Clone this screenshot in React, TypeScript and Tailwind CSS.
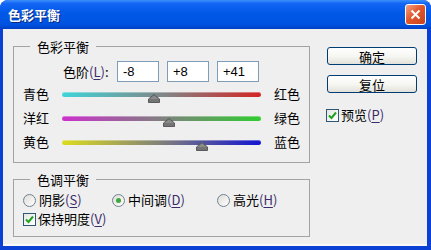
import React from 'react';

interface SliderRow {
  left: string;
  right: string;
  value: number;
  track: string;
}

const sliders: SliderRow[] = [
  { left: '青色', right: '红色', value: -8, track: 'bg-[linear-gradient(to_right,#40d4d8,#7f8888_50%,#d42424)]' },
  { left: '洋红', right: '绿色', value: 8, track: 'bg-[linear-gradient(to_right,#cc30cc,#808080_50%,#30cc30)]' },
  { left: '黄色', right: '蓝色', value: 41, track: 'bg-[linear-gradient(to_right,#dcdc20,#80807a_50%,#1414d4)]' },
];

const TRACK_W = 199;

function Key({ k }: { k: string }) {
  return (
    <span className="text-[#3a2c6a]">
      (<span className="underline underline-offset-[2px]">{k}</span>)
    </span>
  );
}

function CheckBox() {
  return (
    <span className="w-[13px] h-[13px] shrink-0 border border-[#2f5577] bg-[linear-gradient(135deg,#e6e6e0,#ffffff)] flex items-center justify-center">
      <svg width="11" height="11" viewBox="0 0 11 11">
        <path d="M2 5.5 L4.5 8 L9 2.5" fill="none" stroke="#21a121" strokeWidth="2" />
      </svg>
    </span>
  );
}

function Radio({ checked }: { checked?: boolean }) {
  return (
    <span className="w-[13px] h-[13px] shrink-0 rounded-full border border-[#6f8294] bg-[linear-gradient(135deg,#dedcd6,#ffffff)] flex items-center justify-center">
      {checked && <span className="w-[5px] h-[5px] rounded-full bg-[#3ea83e]" />}
    </span>
  );
}

function Caption({ text }: { text: string }) {
  return <div className="-mt-[8px] ml-[16px] px-[7px] w-fit bg-[#efefef] leading-[15px]">{text}</div>;
}

function Thumb({ value }: { value: number }) {
  const left = ((value + 100) / 200) * TRACK_W - 6;
  return (
    <svg className="absolute top-[2px]" style={{ left }} width="12" height="9" viewBox="0 0 12 9">
      <path d="M6 0.5 L11.5 5 L11.5 8.5 L0.5 8.5 L0.5 5 Z" fill="#747474" stroke="#5a5a5a" strokeWidth="1" />
      <path d="M6 1.5 L10.5 5 L1.5 5 Z" fill="#8c8c8c" />
    </svg>
  );
}

export default function App() {
  return (
    <div className="w-[431px] h-[250px] bg-[#0a40d4] rounded-t-[8px] flex flex-col overflow-hidden font-['Noto_Sans_CJK_SC','Noto_Sans',sans-serif] text-[13px] text-black">
      {/* Title bar */}
      <div className="h-[29px] shrink-0 flex items-center justify-between pl-[8px] pr-[5px] bg-[linear-gradient(to_bottom,#3d8ffc,#1466f4_12%,#0058e8_45%,#0052e0_85%,#0040c4)]">
        <span className="text-white font-bold text-[13px] leading-none [text-shadow:1px_1px_0_#0a2a80]">色彩平衡</span>
        <span className="w-[21px] h-[21px] rounded-[3px] border border-white bg-[linear-gradient(135deg,#f3a386,#e2582c_45%,#c9421c)] flex items-center justify-center">
          <svg width="11" height="11" viewBox="0 0 11 11">
            <path d="M1.5 1.5 L9.5 9.5 M9.5 1.5 L1.5 9.5" stroke="white" strokeWidth="2" />
          </svg>
        </span>
      </div>

      {/* Body */}
      <div className="flex-1 ml-[3px] mr-[4px] mb-[4px] bg-[#efefef] border-b-2 border-[#f8f8f8] flex pt-[17px] pl-[10px] pr-[10px]">
        <div className="w-[297px] flex flex-col">
          {/* 色彩平衡 */}
          <div className="border border-[#a3a3a3] pb-[8px]">
            <Caption text="色彩平衡" />
            <div className="mt-[7px] pl-[49px] flex items-center h-[21px]">
              <span className="w-[54px]">
                色阶<Key k="L" />:
              </span>
              <div className="flex gap-[8px]">
                {['-8', '+8', '+41'].map(v => (
                  <div
                    key={v}
                    className="w-[42px] h-[21px] bg-white border border-[#7f9db9] pl-[5px] flex items-center font-['Liberation_Sans',sans-serif] text-[13px]"
                  >
                    {v}
                  </div>
                ))}
              </div>
            </div>
            {sliders.map(s => (
              <div key={s.left} className="h-[24px] pl-[9px] flex items-center">
                <span className="w-[39px]">{s.left}</span>
                <div className="relative w-[199px] h-[5px]">
                  <div className={`h-[5px] rounded-full ${s.track} shadow-[inset_0_1px_0_rgba(255,255,255,0.35)]`} />
                  <Thumb value={s.value} />
                </div>
                <span className="ml-[13px]">{s.right}</span>
              </div>
            ))}
          </div>

          {/* 色调平衡 */}
          <div className="mt-[16px] border border-[#a3a3a3] pb-[9px]">
            <Caption text="色调平衡" />
            <div className="mt-[5px] h-[16px] pl-[9px] flex items-center">
              <div className="w-[89px] flex items-center gap-[3px]">
                <Radio />
                <span>阴影<Key k="S" /></span>
              </div>
              <div className="w-[105px] flex items-center gap-[3px]">
                <Radio checked />
                <span>中间调<Key k="D" /></span>
              </div>
              <div className="flex items-center gap-[3px]">
                <Radio />
                <span>高光<Key k="H" /></span>
              </div>
            </div>
            <div className="mt-[3px] h-[16px] pl-[9px] flex items-center gap-[2px]">
              <CheckBox />
              <span>保持明度<Key k="V" /></span>
            </div>
          </div>
        </div>

        {/* Buttons */}
        <div className="ml-[17px] w-[90px] mt-[1px] flex flex-col">
          <button className="h-[18px] rounded-[3px] border border-[#003c74] bg-[linear-gradient(to_bottom,#ffffff,#f5f5f1_55%,#e2e1da)] leading-none">
            确定
          </button>
          <button className="mt-[10px] h-[18px] rounded-[3px] border border-[#003c74] bg-[linear-gradient(to_bottom,#ffffff,#f5f5f1_55%,#e2e1da)] leading-none">
            复位
          </button>
          <div className="mt-[14px] h-[16px] flex items-center gap-[2px] -ml-[1px]">
            <CheckBox />
            <span>预览<Key k="P" /></span>
          </div>
        </div>
      </div>
    </div>
  );
}
